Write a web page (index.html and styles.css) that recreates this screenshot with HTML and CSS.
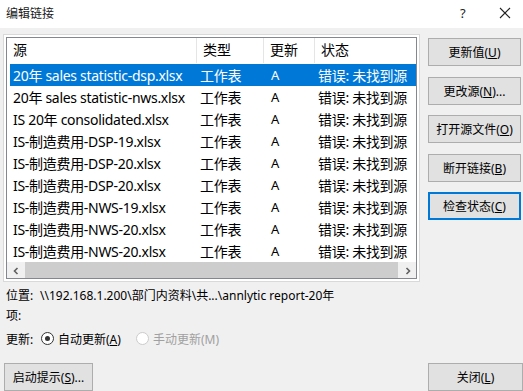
FILE: index.html
```html
<!DOCTYPE html>
<html lang="zh-CN">
<head>
    <meta charset="UTF-8">
    <meta name="viewport" content="width=device-width, initial-scale=1.0">
    <title>编辑链接</title>
    <link rel="stylesheet" href="styles.css">
</head>
<body>
    <div class="dialog">
        <div class="titlebar">
            <span class="title">编辑链接</span>
            <span class="help">?</span>
            <span class="close">
                <svg width="12" height="12" viewBox="0 0 12 12"><path d="M1 1L11 11M11 1L1 11" stroke="#222" stroke-width="1.1" fill="none"/></svg>
            </span>
        </div>

        <div class="main">
            <div class="listbox">
                <div class="listview">
                    <div class="row head">
                        <div class="cell">源</div>
                        <div class="cell">类型</div>
                        <div class="cell">更新</div>
                        <div class="cell">状态</div>
                    </div>
                    <div class="row selected">
                        <div class="cell">20年 sales statistic-dsp.xlsx</div>
                        <div class="cell">工作表</div>
                        <div class="cell upd">A</div>
                        <div class="cell">错误: 未找到源</div>
                    </div>
                    <div class="row">
                        <div class="cell">20年 sales statistic-nws.xlsx</div>
                        <div class="cell">工作表</div>
                        <div class="cell upd">A</div>
                        <div class="cell">错误: 未找到源</div>
                    </div>
                    <div class="row">
                        <div class="cell">IS 20年 consolidated.xlsx</div>
                        <div class="cell">工作表</div>
                        <div class="cell upd">A</div>
                        <div class="cell">错误: 未找到源</div>
                    </div>
                    <div class="row">
                        <div class="cell">IS-制造费用-DSP-19.xlsx</div>
                        <div class="cell">工作表</div>
                        <div class="cell upd">A</div>
                        <div class="cell">错误: 未找到源</div>
                    </div>
                    <div class="row">
                        <div class="cell">IS-制造费用-DSP-20.xlsx</div>
                        <div class="cell">工作表</div>
                        <div class="cell upd">A</div>
                        <div class="cell">错误: 未找到源</div>
                    </div>
                    <div class="row">
                        <div class="cell">IS-制造费用-DSP-20.xlsx</div>
                        <div class="cell">工作表</div>
                        <div class="cell upd">A</div>
                        <div class="cell">错误: 未找到源</div>
                    </div>
                    <div class="row">
                        <div class="cell">IS-制造费用-NWS-19.xlsx</div>
                        <div class="cell">工作表</div>
                        <div class="cell upd">A</div>
                        <div class="cell">错误: 未找到源</div>
                    </div>
                    <div class="row">
                        <div class="cell">IS-制造费用-NWS-20.xlsx</div>
                        <div class="cell">工作表</div>
                        <div class="cell upd">A</div>
                        <div class="cell">错误: 未找到源</div>
                    </div>
                    <div class="row">
                        <div class="cell">IS-制造费用-NWS-20.xlsx</div>
                        <div class="cell">工作表</div>
                        <div class="cell upd">A</div>
                        <div class="cell">错误: 未找到源</div>
                    </div>
                    <div class="hscroll">
                        <span class="arrow">
                            <svg width="8" height="8" viewBox="0 0 8 8"><path d="M5.5 1L2.5 4L5.5 7" stroke="#606060" stroke-width="1.6" fill="none"/></svg>
                        </span>
                        <span class="thumb"></span>
                        <span class="arrow">
                            <svg width="8" height="8" viewBox="0 0 8 8"><path d="M2.5 1L5.5 4L2.5 7" stroke="#606060" stroke-width="1.6" fill="none"/></svg>
                        </span>
                    </div>
                </div>
            </div>

            <div class="side-buttons">
                <button>更新值(<u>U</u>)</button>
                <button>更改源(<u>N</u>)...</button>
                <button>打开源文件(<u>O</u>)</button>
                <button>断开链接(<u>B</u>)</button>
                <button class="focused">检查状态(<u>C</u>)</button>
            </div>
        </div>

        <div class="info">
            <div class="line">
                <span class="label">位置:</span>
                <span>\\192.168.1.200\部门内资料\共...\annlytic report-20年</span>
            </div>
            <div class="line">
                <span class="label">项:</span>
            </div>
            <div class="line">
                <span class="label">更新:</span>
                <span class="radio checked"></span>
                <span class="radio-text">自动更新(<u>A</u>)</span>
                <span class="radio disabled"></span>
                <span class="radio-text disabled">手动更新(M)</span>
            </div>
        </div>

        <div class="footer">
            <button class="small">启动提示(<u>S</u>)...</button>
            <button class="close-btn">关闭(<u>L</u>)</button>
        </div>
    </div>
</body>
</html>
```

FILE: styles.css
```css
body {
    margin: 0;
    font-family: "Noto Sans", "Noto Sans CJK SC", sans-serif;
    font-size: 12px;
    color: #000;
    background-color: #f0f0f0;
    overflow: hidden;
}

.dialog {
    width: 523px;
    height: 391px;
    display: flex;
    flex-direction: column;
}

.dialog > div {
    flex-shrink: 0;
}

.titlebar {
    height: 28px;
    background-color: #fff;
    display: flex;
    align-items: center;
    padding-left: 6px;
}

.title {
    flex: 1;
    font-size: 12px;
    color: #1a1a1a;
    margin-top: -3px;
}

.help {
    width: 14px;
    margin-right: 25px;
    font-size: 13px;
    color: #222;
    margin-top: -3px;
}

.close {
    width: 22px;
    display: flex;
    margin-right: 2px;
    margin-top: -3px;
}

.main {
    display: flex;
    padding: 6px 0 0 3px;
}

/* list with the links */
.listbox {
    width: 417px;
    height: 248px;
    box-sizing: border-box;
    border: 1px solid #d9d9d9;
    background-color: #fff;
    padding: 2px;
}

.listview {
    height: 100%;
    border: 1px solid #828790;
    box-sizing: border-box;
    display: flex;
    flex-direction: column;
    overflow: hidden;
}

.row {
    display: grid;
    grid-template-columns: 187px 67px 51px 1fr;
    height: 22px;
    flex-shrink: 0;
    align-items: center;
    font-size: 14px;
    letter-spacing: -0.3px;
    margin-left: 3px;
    white-space: nowrap;
}

.row .cell {
    padding-left: 3px;
    overflow: hidden;
}

.row .upd {
    padding-left: 7px;
    font-size: 13px;
}

.row.head {
    height: 25px;
    margin-left: 0;
    margin-bottom: 1px;
    letter-spacing: 0;
    grid-template-columns: 190px 67px 51px 1fr;
}

.row.head .cell {
    padding-left: 6px;
    border-right: 1px solid #e5e5e5;
    height: 25px;
    line-height: 24px;
}

.row.head .cell:last-child {
    border-right: none;
}

.row.selected {
    background-color: #0078d7;
    color: #fff;
}

.hscroll {
    margin-top: auto;
    height: 17px;
    flex-shrink: 0;
    display: flex;
    background-color: #f0f0f0;
}

.hscroll .arrow {
    width: 17px;
    display: flex;
    align-items: center;
    justify-content: center;
}

.hscroll .thumb {
    flex: 1;
    margin: 0 1px;
    background-color: #cdcdcd;
}

/* buttons on the right */
.side-buttons {
    display: flex;
    flex-direction: column;
    gap: 10.5px;
    margin-left: 8px;
    margin-top: 4px;
}

button {
    font-family: "Noto Sans", "Noto Sans CJK SC", sans-serif;
    font-size: 12px;
    color: #000;
    background-color: #e1e1e1;
    border: 1px solid #adadad;
    width: 93px;
    height: 28px;
    padding: 0;
}

button.focused {
    border: 2px solid #0078d7;
}

/* location and update mode */
.info {
    padding: 3px 0 0 6px;
    display: flex;
    flex-direction: column;
}

.line {
    display: flex;
    align-items: center;
    height: 20px;
    white-space: nowrap;
}

.line:last-child {
    height: 27px;
}

.label {
    width: 34px;
}

.radio {
    width: 11px;
    height: 11px;
    border: 1px solid #333;
    border-radius: 50%;
    margin: 0 4px 0 1px;
    position: relative;
    background-color: #fff;
}

.radio.checked::after {
    content: "";
    position: absolute;
    left: 3px;
    top: 3px;
    width: 5px;
    height: 5px;
    border-radius: 50%;
    background-color: #333;
}

.radio.disabled {
    border-color: #cccccc;
    margin-left: 15px;
}

.radio-text.disabled {
    color: #a0a0a0;
}

.footer {
    display: flex;
    justify-content: space-between;
    padding: 11px 0 0 4px;
}

button.small {
    width: 89px;
}

button.close-btn {
    width: 95px;
}
```
